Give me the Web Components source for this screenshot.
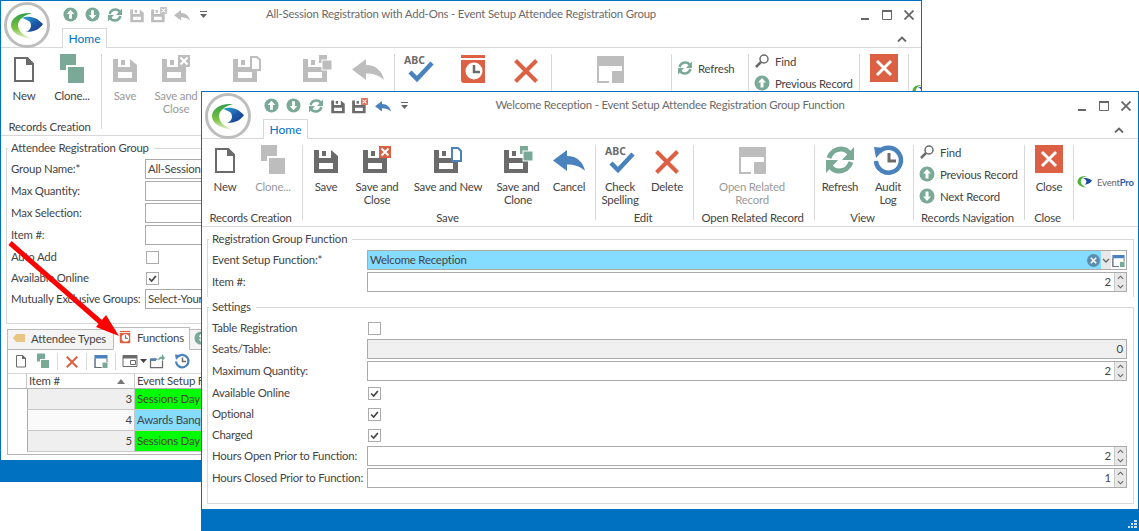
<!DOCTYPE html>
<html><head><meta charset="utf-8"><title>Registration</title>
<style>
html,body{margin:0;padding:0;background:#fff;overflow:hidden}
desk-top{font-family:Lato,Roboto,sans-serif;font-size:11.4px;letter-spacing:-.2px;color:#444}
</style></head><body>
<desk-top>
<app-window title="All-Session Registration with Add-Ons - Event Setup Attendee Registration Group" x="0" y="0" w="922" h="482" back>
  <rb-group slot="ribbon" w="101" label="Records Creation" pad="1"><rb-btn w="44" icon="new">New</rb-btn><rb-btn w="52" icon="clone">Clone...</rb-btn></rb-group>
  <rb-group slot="ribbon" w="293"><rb-btn w="46" icon="save" off>Save</rb-btn><rb-btn w="56" icon="saveclose" off>Save and<br>Close</rb-btn><rb-btn w="86" icon="savenew" off></rb-btn><rb-btn w="54" icon="saveclone" off></rb-btn><rb-btn w="48" icon="cancel" off></rb-btn></rb-group>
  <rb-group slot="ribbon" w="157"><rb-btn w="48" icon="check"></rb-btn><rb-btn w="60" icon="history"></rb-btn><rb-btn w="46" icon="del"></rb-btn></rb-group>
  <rb-group slot="ribbon" w="120"><rb-btn w="116" icon="related" off></rb-btn></rb-group>
  <rb-group slot="ribbon" w="77" pad="5"><rb-small icon="refresh" class="mid">Refresh</rb-small></rb-group>
  <rb-group slot="ribbon" w="111" pad="5" col><rb-small icon="find">Find</rb-small><rb-small icon="prev">Previous Record</rb-small></rb-group>
  <rb-group slot="ribbon" w="49"><rb-btn w="48" icon="close"></rb-btn></rb-group>
  <event-logo slot="ribbon" mark></event-logo>

  <group-box legend="Attendee Registration Group" end="12">
    <form-row lw="134" label="Group Name:*" type="text" value="All-Session Registration"></form-row>
    <form-row lw="134" label="Max Quantity:" type="text"></form-row>
    <form-row lw="134" label="Max Selection:" type="text"></form-row>
    <form-row lw="134" label="Item #:" type="text"></form-row>
    <form-row lw="134" label="Auto Add" type="check"></form-row>
    <form-row lw="134" label="Available Online" type="check" checked></form-row>
    <form-row lw="134" label="Mutually Exclusive Groups:" type="text" value="Select-Your-Sessions"></form-row>
  </group-box>
  <tab-panel>
    <tab-item slot="tabs" icon="tag" w="107">Attendee Types</tab-item>
    <tab-item slot="tabs" icon="history" w="77" active>Functions</tab-item>
    <tab-item slot="tabs" icon="money" w="30"></tab-item>
    <mini-toolbar></mini-toolbar>
    <data-grid></data-grid>
  </tab-panel>
</app-window>

<red-arrow></red-arrow>

<app-window title="Welcome Reception - Event Setup Attendee Registration Group Function" x="201" y="91" w="938" h="440">
  <rb-group slot="ribbon" w="101" label="Records Creation" pad="1"><rb-btn w="44" icon="new">New</rb-btn><rb-btn w="52" icon="clone" off>Clone...</rb-btn></rb-group>
  <rb-group slot="ribbon" w="293" label="Save"><rb-btn w="46" icon="save">Save</rb-btn><rb-btn w="56" icon="saveclose">Save and<br>Close</rb-btn><rb-btn w="86" icon="savenew">Save and New</rb-btn><rb-btn w="54" icon="saveclone">Save and<br>Clone</rb-btn><rb-btn w="48" icon="cancel">Cancel</rb-btn></rb-group>
  <rb-group slot="ribbon" w="98" label="Edit"><rb-btn w="48" icon="check">Check<br>Spelling</rb-btn><rb-btn w="46" icon="del">Delete</rb-btn></rb-group>
  <rb-group slot="ribbon" w="121" label="Open Related Record"><rb-btn w="116" icon="related" off>Open Related<br>Record</rb-btn></rb-group>
  <rb-group slot="ribbon" w="99" label="View"><rb-btn w="50" icon="refresh">Refresh</rb-btn><rb-btn w="46" icon="audit">Audit<br>Log</rb-btn></rb-group>
  <rb-group slot="ribbon" w="111" label="Records Navigation" pad="5" col><rb-small icon="find">Find</rb-small><rb-small icon="prev">Previous Record</rb-small><rb-small icon="next">Next Record</rb-small></rb-group>
  <rb-group slot="ribbon" w="49" label="Close"><rb-btn w="48" icon="close">Close</rb-btn></rb-group>
  <event-logo slot="ribbon"></event-logo>

  <group-box legend="Registration Group Function" noend end="3">
    <form-row label="Event Setup Function:*" type="combo" value="Welcome Reception"></form-row>
    <form-row label="Item #:" type="spin" value="2"></form-row>
  </group-box>
  <group-box legend="Settings" end="13" top="3">
    <form-row label="Table Registration" type="check"></form-row>
    <form-row label="Seats/Table:" type="readonly" value="0"></form-row>
    <form-row label="Maximum Quantity:" type="spin" value="2"></form-row>
    <form-row label="Available Online" type="check" checked></form-row>
    <form-row label="Optional" type="check" checked></form-row>
    <form-row label="Charged" type="check" checked></form-row>
    <form-row label="Hours Open Prior to Function:" type="spin" value="2"></form-row>
    <form-row label="Hours Closed Prior to Function:" type="spin" value="1"></form-row>
  </group-box>
</app-window>
</desk-top>

<script>
const C={g:'#7aa997',r:'#db6044',b:'#4a82bd',k:'#6b6b6b'};
const OFF={g:'#bdbdbd',r:'#bdbdbd',b:'#bdbdbd',k:'#bdbdbd'};
const diskFull='M4 6h17l7 6v17H4z M9 6v8h12V6z M12 7h4v5h-4z M9 19h14v6H9z';
const diskCut='M2 6h15v8h9v15H2z M7 6v8h10V6z M10 7h4v5h-4z M7 19h14v6H7z';
const xMark=(x,y,s,col,w)=>`<path d="M${x} ${y}l${s} ${s}M${x+s} ${y}l${-s} ${s}" stroke="${col}" stroke-width="${w}" fill="none"/>`;
const ICONS={
 new:c=>`<path d="M7 5h12l6 6v17H7z" fill="#fff" stroke="${c.k}" stroke-width="2"/><path d="M18 4h1.500l6.500 6.500V12h-8z" fill="${c.k}"/>`,
 clone:c=>`<rect x="4" y="1" width="16" height="16" fill="${c.g}"/><rect x="11" y="13" width="18" height="18" fill="${c.g}" stroke="#fff" stroke-width="2"/>`,
 save:c=>`<path fill-rule="evenodd" d="${diskFull}" fill="${c.k}"/>`,
 saveclose:c=>`<path fill-rule="evenodd" d="${diskCut}" fill="${c.k}"/><rect x="18" y="2" width="12" height="12" fill="${c.r}"/>${xMark(20.500,4.500,7,'#fff',2)}`,
 savenew:c=>`<path fill-rule="evenodd" d="${diskCut}" fill="${c.k}"/><path d="M20 4h6l3 3v10h-9z" fill="#fff" stroke="${c.b}" stroke-width="2"/>`,
 saveclone:c=>`<path fill-rule="evenodd" d="${diskCut}" fill="${c.k}"/><rect x="18" y="2" width="8" height="8" fill="${c.g}"/><rect x="21" y="7" width="10" height="10" fill="${c.g}" stroke="#fff" stroke-width="1"/>`,
 cancel:c=>`<path d="M0 16.500L14 6v6C24 12 30 18 32 27 27 22 21 20.500 14 20.500V27z" fill="${c.b}"/>`,
 check:c=>`<text x="1" y="11" font-family="Noto Sans,sans-serif" font-weight="700" font-size="10.500" letter-spacing="0" fill="${c.k}">ABC</text><path d="M7 19l7 7L29 10" fill="none" stroke="${c.b}" stroke-width="4.500"/>`,
 del:c=>xMark(5.500,7.500,21,c.r,4),
 related:c=>`<path d="M3 3h27v10H5v15h10v2H3z" fill="${c.k}"/><path d="M28 13h2v5h-2z" fill="${c.k}"/><rect x="18" y="18" width="12" height="12" fill="${c.k}"/>`,
 relblue:c=>`<path d="M3 4h26v7H5v17h12v2H3z" fill="${c.b}"/><path d="M27 11h2v7h-2z" fill="${c.k}"/><rect x="19" y="19" width="10" height="11" fill="${c.g}"/><path d="M3 11h2v19H3zM3 28h14v2H3z" fill="${c.k}"/>`,
 relgrey:c=>`<path d="M2 5h28v22H2z" fill="#fff" stroke="${c.k}" stroke-width="2"/><path d="M2 5h28v6H2z" fill="${c.k}"/><path d="M17 15h10v8H17z" fill="#fff" stroke="${c.k}" stroke-width="2"/>`,
 export:c=>`<path d="M3 12h14M3 12v17h24V16" fill="none" stroke="${c.k}" stroke-width="2.500"/><path d="M3 11h11v5H3z" fill="${c.b}"/><path d="M18 16c0-6 3-9 8-9V2l6 8-6 7v-5c-3 0-6 1-8 4z" fill="${c.g}"/>`,
 refresh:c=>`<path d="M5 14C7 8 12 5 17 5c4 0 7 2 9 5" fill="none" stroke="${c.g}" stroke-width="5"/><path d="M30 3v13H18z" fill="${c.g}"/><path d="M27 18c-2 6-7 9-12 9-4 0-7-2-9-5" fill="none" stroke="${c.g}" stroke-width="5"/><path d="M2 29V16h12z" fill="${c.g}"/>`,
 audit:c=>`<path d="M7 8A12.500 12.500 0 1 1 4 17" fill="none" stroke="${c.b}" stroke-width="4.500"/><path d="M2 3l11 1-9 10z" fill="${c.b}"/><path d="M17 9v8h7" fill="none" stroke="${c.k}" stroke-width="3"/>`,
 find:c=>`<circle cx="20" cy="12" r="8" fill="none" stroke="${c.k}" stroke-width="3"/><path d="M14 18L4 28" stroke="${c.k}" stroke-width="5"/>`,
 prev:c=>`<circle cx="16" cy="16" r="15" fill="${c.g}"/><path d="M16 6l-8 9h5v10h6V15h5z" fill="#fff"/>`,
 next:c=>`<circle cx="16" cy="16" r="15" fill="${c.g}"/><path d="M16 26l-8-9h5V7h6v10h5z" fill="#fff"/>`,
 close:c=>`<rect x="2" y="1" width="28" height="28" fill="${c.r}"/>${xMark(9,8,14,'#fff',3)}`,
 history:c=>`<path d="M4 2h24v3H4z" fill="${c.r}"/><path d="M4 7h24v23H7c-2 0-3-1-3-3z" fill="${c.r}"/><circle cx="17" cy="18" r="8.500" fill="#fff"/><path d="M17 12v7h6" fill="none" stroke="${c.k}" stroke-width="2.500"/>`,
 tag:c=>`<path d="M2 16L10 7h20v18H10z" fill="#e9c583"/>`,
 money:c=>`<circle cx="16" cy="16" r="15" fill="${c.g}"/><path d="M20 11c-1-2-7-2-7 1s7 2 7 6-6 3-8 1M16 7v18" fill="none" stroke="#fff" stroke-width="2.500"/>`
};
function def(name,css,html,init){
  customElements.define(name,class extends HTMLElement{
    constructor(){super();this.attachShadow({mode:'open'});}
    connectedCallback(){
      const h=typeof html==='function'?html(this):html;
      this.shadowRoot.innerHTML=`<style>${css(this)}</style>${h}`;
      if(init)init(this);
    }
  });
}
def('desk-top',()=>`:host{display:block;position:relative;width:1139px;height:531px;overflow:hidden;background:#fff}`,`<slot></slot>`);
def('rb-icon',e=>`:host{display:inline-block;width:${e.getAttribute('size')||32}px;height:${e.getAttribute('size')||32}px;flex:none;line-height:0}svg{display:block;width:100%;height:100%;overflow:visible}`,
 e=>`<svg viewBox="0 0 32 32">${ICONS[e.getAttribute('name')](e.hasAttribute('off')?OFF:C)}</svg>`);
def('rb-btn',e=>`:host{display:flex;flex-direction:column;align-items:center;flex:none;width:${e.getAttribute('w')}px;margin-top:-1px;color:${e.hasAttribute('off')?'#9a9a9a':'inherit'}}
 .t{margin-top:4px;line-height:13px;text-align:center;white-space:nowrap}`,
 e=>`<rb-icon name="${e.getAttribute('icon')}" ${e.hasAttribute('off')?'off':''}></rb-icon><div class="t"><slot></slot></div>`);
def('rb-small',e=>`:host{display:flex;align-items:center;gap:5px;height:22px;white-space:nowrap}`,
 e=>`<rb-icon size="16" name="${e.getAttribute('icon')}"></rb-icon><slot></slot>`);
def('rb-group',e=>`:host{display:flex;flex-direction:column;flex:none;box-sizing:border-box;width:${e.getAttribute('w')}px;height:75px;margin-top:6px;border-right:1px solid #d8d8d8}
 .i{display:flex;flex:none;${e.hasAttribute('col')?'flex-direction:column;margin-top:-4px;height:70px;':'height:66px;'}box-sizing:border-box;padding-left:${e.getAttribute('pad')||0}px;}
 .l{flex:none;height:14px;line-height:14px;text-align:center;white-space:nowrap;padding-right:3px}
 ::slotted(.mid){margin-top:3px}`,
 e=>`<div class="i"><slot></slot></div>${e.hasAttribute('label')?`<div class="l">${e.getAttribute('label')}</div>`:''}`);
def('event-logo',()=>`:host{display:flex;align-items:center;flex:none;margin:32px 0 0 1px;height:22px;font-size:9.500px;color:#666;white-space:nowrap}svg{width:20px;height:14px;margin-right:2px}b{color:#2b5ca8;font-weight:700}`,
 e=>`<svg viewBox="6 9 36 30"><path d="M28 11C14 10 8 17 8 23c0 7 6 11 19 13-9-4-12-9-12-13 0-5 5-10 13-12z" fill="#4fb03c"/><path d="M19 17c5-3 14-2 20 4-3 5-9 9-16 9 4-3 5-7 3-10-2-2-4-3-7-3z" fill="#1f4d9e"/></svg>${e.hasAttribute('mark')?'':'<span>Event<b>Pro</b></span>'}`);
const qat=off=>[['prev',''],['next',''],['refresh',''],['save',off],['saveclose',off],['cancel',off]];
def('app-window',e=>`:host{position:absolute;display:flex;flex-direction:column;box-sizing:border-box;left:${e.getAttribute('x')}px;top:${e.getAttribute('y')}px;width:${e.getAttribute('w')}px;height:${e.getAttribute('h')}px;border:1px solid #0070c0;background:#fff;overflow:hidden}
 .logo{position:absolute;left:3px;top:1px;width:46px;height:46px;z-index:2}
 .bar{display:grid;grid-template-columns:1fr auto 1fr;align-items:center;height:27px;flex:none}
 .qat{display:flex;align-items:center;padding-left:58px;height:27px}
 .qat span{display:flex;justify-content:center;align-items:center;width:22.300px}
 .title{color:#6b6b6b;white-space:nowrap;padding-bottom:2px}
 .ctl{display:flex;justify-content:flex-end;padding-right:7px;gap:12px}
 .ctl svg{width:10px;height:10px;display:block}
 .tabs{display:flex;justify-content:space-between;height:19px;border-bottom:1px solid #d8d8d8;padding-left:61px;flex:none}
 .home{box-sizing:border-box;width:45px;height:20px;border:1px solid #d8d8d8;border-bottom:0;background:#fff;color:#0072c6;text-align:center;line-height:20px;font-size:12px;letter-spacing:0}
 .chev{width:10px;height:6px;margin:8px 14px 0 0}
 .rib{display:flex;height:87px;border-bottom:1px solid #d8d8d8;flex:none}
 .body{flex:1;min-height:0;padding:5px ${e.hasAttribute('back')?711:4}px 0 5px;box-sizing:border-box;overflow:hidden}
 .st{height:21px;background:#0070c0;flex:none;position:relative}
 .grip{position:absolute;right:1px;bottom:1px;width:9px;height:9px}`,
 e=>{const off=e.hasAttribute('back')?'off':'';return `
 <svg class="logo" viewBox="0 0 46 46"><defs><linearGradient id="g1" x1="0" y1="0" x2="0" y2="1"><stop offset="0" stop-color="#2f9f45"/><stop offset=".6" stop-color="#7cc242"/><stop offset="1" stop-color="#e6f2d5"/></linearGradient><linearGradient id="b1" x1="0" y1="0" x2="1" y2="1"><stop offset="0" stop-color="#2aa6d8"/><stop offset=".55" stop-color="#1d56a5"/><stop offset="1" stop-color="#1b3a8c"/></linearGradient></defs>
 <circle cx="23" cy="23" r="21.500" fill="#fff" stroke="#bdbdbd" stroke-width="3"/>
 <path d="M28 11C14 10 7 17 7 23c0 7 7 12 21 14-10-4-14-9-14-14 0-5 6-10 14-12z" fill="url(#g1)"/>
 <path d="M18 16c6-3 15-1 21 6-3 5-9 8-17 8 5-2 6-6 4-10-2-2-5-3-8-4z" fill="url(#b1)"/></svg>
 <div class="bar"><div class="qat">${qat(off).map(([n,o])=>`<span><rb-icon size="${n=='prev'||n=='next'?15:n=='cancel'?16:n=='refresh'?16:18}" name="${n}" ${o}></rb-icon></span>`).join('')}<span><svg width="8" height="7" viewBox="0 0 8 7"><path d="M0 0h7v1H0zM0 3h7L3.500 7z" fill="#666"/></svg></span></div>
 <div class="title">${e.getAttribute('title')}</div>
 <div class="ctl"><svg viewBox="0 0 10 10"><path d="M1 8h8v2H1z" fill="#666"/></svg><svg viewBox="0 0 10 10"><path d="M.5 1.500h9v8h-9z" fill="none" stroke="#666"/><path d="M0 0h10v2H0z" fill="#666"/></svg><svg viewBox="0 0 10 10"><path d="M.5.500l9 9M9.500.500l-9 9" stroke="#666" stroke-width="1.800"/></svg></div></div>
 <div class="tabs"><div class="home">Home</div><svg class="chev" viewBox="0 0 10 6"><path d="M1 5.500l4-4 4 4" fill="none" stroke="#666" stroke-width="1.800"/></svg></div>
 <div class="rib"><slot name="ribbon"></slot></div>
 <div class="body"><slot></slot></div>
 <div class="st"><svg class="grip" viewBox="0 0 9 9" fill="#cfe2f3">${e.hasAttribute('back')?'':'<path d="M6 0h3v2H6zM3 3h2v2H3zM6 3h3v2H6zM0 6h2v2H0zM3 6h2v2H3zM6 6h3v2H6z"/>'}</svg></div>`});
def('group-box',e=>`:host{display:block;margin-top:${e.getAttribute('top')||0}px}
 fieldset{margin:0;min-width:0;border:1px solid #d8d8d8;${e.hasAttribute('noend')?'border-bottom:0;':''}padding:4px 6px ${e.getAttribute('end')}px 4px;box-sizing:border-box}
 legend{padding:0 5px 0 3px;margin-left:-3px;height:14px;line-height:14px}`,
 e=>`<fieldset><legend>${e.getAttribute('legend')}</legend><slot></slot></fieldset>`);
const chevUp='<path d="M1 4l3-3 3 3" fill="none" stroke="#666" stroke-width="1.300"/>';
const chevDn='<path d="M1 1l3 3 3-3" fill="none" stroke="#666" stroke-width="1.300"/>';
def('form-row',e=>{const t=e.getAttribute('type');return `:host{display:flex;align-items:center;height:20px;margin-bottom:${t==='check'?1:2}px;white-space:nowrap;line-height:18px}
 .lab{flex:none;width:${e.getAttribute('lw')||155}px}
 .f{flex:1;min-width:0;height:20px;box-sizing:border-box;border:1px solid #ababab;display:flex;align-items:center;background:#fff;position:relative}
 .v{flex:1;min-width:0;padding:0 2px;overflow:hidden;white-space:nowrap}.r{text-align:right;padding-right:3px}
 .f.ro{background:#f0f0f0}.f.combo{background:#84dcff}
 .spin{flex:none;width:11px;height:18px;background:#e8e8e8;border-left:1px solid #c8c8c8;display:flex;flex-direction:column;align-items:center;justify-content:space-around}
 .spin svg{width:7px;height:5px;display:block}
 .clr{flex:none;width:13px;height:13px;margin-right:1px;display:block}
 .dd{flex:none;width:10px;height:18px;background:#e8e8e8;display:flex;align-items:center;justify-content:center}
 .dd svg{width:8px;height:5px}
 .op{flex:none;width:15px;height:18px;background:#fff;display:flex;align-items:center;justify-content:center}
 .cb{box-sizing:border-box;width:13px;height:13px;border:1px solid #ababab;margin-left:1px;background:#fff;display:block}`},
 e=>{const t=e.getAttribute('type'),v=e.getAttribute('value')||'';let f='';
  if(t==='text')f=`<div class="f"><div class="v">${v}</div></div>`;
  if(t==='spin')f=`<div class="f"><div class="v r">${v}</div><div class="spin"><svg viewBox="0 0 8 5">${chevUp}</svg><svg viewBox="0 0 8 5">${chevDn}</svg></div></div>`;
  if(t==='readonly')f=`<div class="f ro"><div class="v r">${v}</div></div>`;
  if(t==='combo')f=`<div class="f combo"><div class="v">${v}</div><svg class="clr" viewBox="0 0 12 12"><circle cx="6" cy="6" r="6" fill="#5b8db0"/><path d="M3.500 3.500l5 5M8.500 3.500l-5 5" stroke="#fff" stroke-width="1.500"/></svg><div class="dd"><svg viewBox="0 0 8 5">${chevDn}</svg></div><div class="op"><rb-icon size="15" name="relblue"></rb-icon></div></div>`;
  if(t==='check')f=`<svg class="cb" viewBox="0 0 13 13">${e.hasAttribute('checked')?'<path d="M2.500 6.500l3 3 5-6" fill="none" stroke="#444" stroke-width="2"/>':''}</svg>`;
  return `<div class="lab">${e.getAttribute('label')}</div>${f}`;});
def('tab-item',e=>`:host{display:flex;align-items:center;gap:5px;box-sizing:border-box;flex:none;width:${e.getAttribute('w')}px;padding:0 0 3px 4px;height:${e.hasAttribute('active')?23:21}px;border:1px solid #bbb;border-bottom:${e.hasAttribute('active')?'1px solid #fff':'1px solid #bbb'};margin-bottom:-1px;margin-right:-1px;background:${e.hasAttribute('active')?'#fff':'#f4f4f4'};white-space:nowrap;${e.hasAttribute('active')?'position:relative;z-index:1;':''}}`,
 e=>`<rb-icon size="14" name="${e.getAttribute('icon')}"></rb-icon><slot></slot>`);
def('tab-panel',()=>`:host{display:block;margin:3px 0 0 1px}
 .t{display:flex;align-items:flex-end;height:22px;position:relative}
 .p{border:1px solid #b4b4b4;height:106px;box-sizing:border-box;position:relative;overflow:hidden}`,
 `<div class="t"><slot name="tabs"></slot></div><div class="p"><slot></slot></div>`);
def('mini-toolbar',()=>`:host{display:flex;align-items:center;height:22px;padding-left:5px}
 span{display:flex;justify-content:center;flex:none;align-items:center}
 i{display:block;flex:none;width:1px;height:17px;background:#d8d8d8;margin:0 6px}`,
 ()=>{const b=(n,w,o='')=>`<span style="width:${w}px"><rb-icon size="16" name="${n}" ${o}></rb-icon></span>`;
  return b('new',16)+`<span style="width:6px"></span>`+b('clone',16)+`<i></i>`+b('del',16)+`<i></i>`+b('relblue',16)+`<i></i>`+b('relgrey',16)+`<span style="width:10px"><svg width="7" height="4" viewBox="0 0 7 4"><path d="M0 0h7L3.500 4z" fill="#444"/></svg></span>`+b('export',18)+`<span style="width:8px"></span>`+b('audit',16);});
def('data-grid',()=>`:host{display:grid;grid-template-columns:19px 108px 1fr;grid-template-rows:16px 21px 21px 21px;margin-top:1px;white-space:nowrap}
 .h{border-top:1px solid #d8d8d8;border-bottom:1px solid #b4b4b4;border-right:1px solid #c8c8c8;line-height:14px;padding-left:2px;position:relative;box-sizing:border-box;background:#fff;height:16px;overflow:hidden}
 .tri{position:absolute;right:9px;top:5px;width:0;height:0;border:4px solid transparent;border-top:0;border-bottom:5px solid #777}
 .n{border-right:1px solid #c8c8c8;border-left:1px solid #ababab;border-bottom:1px solid #c8c8c8;text-align:right;padding:0 2px;line-height:20px;box-sizing:border-box;background:#efefef}
 .a{background:#fafafa}
 .c{line-height:20px;padding-left:2px;border-bottom:1px solid #c8c8c8;box-sizing:border-box;overflow:hidden}
 .gr{background:#00ff00}.bl{background:#84dcff}`,
 `<div class="h" style="padding:0"></div><div class="h">Item #<span class="tri"></span></div><div class="h">Event Setup Function</div>
 <div></div><div class="n">3</div><div class="c gr">Sessions Day 1</div>
 <div></div><div class="n a">4</div><div class="c bl">Awards Banquet</div>
 <div></div><div class="n">5</div><div class="c gr">Sessions Day 2</div>`);
def('red-arrow',()=>`:host{position:absolute;left:0;top:0;width:201px;height:482px;pointer-events:none;z-index:3}svg{display:block}`,
 `<svg width="201" height="482" viewBox="0 0 201 482"><path d="M10 243L106 327" stroke="#f00" stroke-width="5"/><path d="M119 336L96 327 106 315z" fill="#f00"/></svg>`);
</script>
</body></html>
